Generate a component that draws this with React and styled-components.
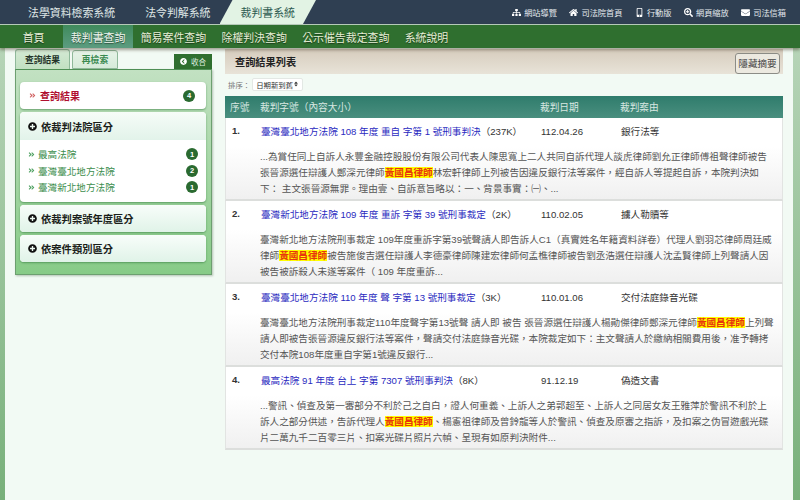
import { createGlobalStyle, styled } from "styled-components";
import {
  FaSitemap,
  FaHome,
  FaMobileAlt,
  FaSearchPlus,
  FaEnvelope,
  FaPlusCircle,
  FaAngleDoubleRight,
  FaChevronCircleLeft,
  FaSort,
} from "react-icons/fa";

const GlobalStyle = createGlobalStyle`
  html, body {
    margin: 0;
    padding: 0;
    height: 100%;
    overflow: hidden;
  }
  body {
    font-family: "Liberation Sans", "Noto Sans CJK TC", sans-serif;
  }
`;

const Page = styled.div`
  width: 800px;
  height: 500px;
  display: flex;
  flex-direction: column;
  overflow: hidden;
`;

const SystemBar = styled.div`
  height: 24px;
  flex: none;
  background: #2f3f52;
  border-bottom: 1px solid #b9cdbd;
  display: flex;
  align-items: center;
  justify-content: space-between;
  padding-left: 13px;
  padding-right: 14px;
`;

const SystemTabs = styled.div`
  display: flex;
  height: 100%;
`;

const SystemTab = styled.div`
  padding: 0 15px;
  display: flex;
  align-items: center;
  font-size: 10.9px;
  color: ${(p) => (p.$active ? "#2c5a50" : "#dfe6e6")};
  background: ${(p) => (p.$active ? "#e2f3e4" : "transparent")};
  clip-path: ${(p) =>
    p.$active ? "polygon(13px 0, 100% 0, calc(100% - 13px) 100%, 0 100%)" : "none"};
  ${(p) => p.$active && "padding: 0 21px; margin-left: -6px;"}
`;

const UtilLinks = styled.div`
  display: flex;
  align-items: center;
  gap: 12.5px;
`;

const UtilLink = styled.div`
  display: flex;
  align-items: center;
  gap: 3px;
  font-size: 8.2px;
  color: #e4eaee;
  svg {
    font-size: 9px;
    color: #fff;
  }
`;

const MainNav = styled.div`
  height: 23px;
  flex: none;
  background: #2f6f2f;
  display: flex;
  padding-left: 15px;
  box-shadow: 0 2px 3px rgba(60, 50, 30, 0.45);
  position: relative;
  z-index: 2;
`;

const NavItem = styled.div`
  display: flex;
  align-items: center;
  padding: 0 7.7px;
  margin-right: ${(p) => p.$gap || 0}px;
  font-size: 10.9px;
  color: ${(p) => (p.$active ? "#eef6ee" : "#e6efd6")};
  text-shadow: 0 1px 1px rgba(0, 0, 0, 0.5);
  background: ${(p) =>
    p.$active ? "linear-gradient(#3f8a5c, #5c9c80)" : "transparent"};
`;

const Body = styled.div`
  flex: 1;
  display: flex;
  padding: 0 7px 0 5px;
  background: linear-gradient(#b6d4b7, #78b07a);
  min-height: 0;
`;

const Main = styled.div`
  flex: 1;
  background: #f2faf4;
  display: flex;
  gap: 13px;
  padding: 1px 10px 0;
  min-width: 0;
`;

const Sidebar = styled.div`
  width: 197px;
  flex: none;
`;

const TabRow = styled.div`
  height: 20px;
  display: flex;
  align-items: flex-end;
  gap: 2px;
  position: relative;
  z-index: 1;
`;

const SideTab = styled.div`
  height: ${(p) => (p.$active ? 20 : 19)}px;
  box-sizing: border-box;
  width: ${(p) => (p.$active ? 55 : 46)}px;
  display: flex;
  align-items: center;
  justify-content: center;
  font-size: 8.8px;
  font-weight: bold;
  color: ${(p) => (p.$active ? "#24342a" : "#3a8a50")};
  background: ${(p) =>
    p.$active ? "linear-gradient(#d3e9d3, #c2e0c2)" : "linear-gradient(#e6f3e8, #d6ebd9)"};
  border: 1px solid #8fb89a;
  border-bottom: ${(p) => (p.$active ? "none" : "1px solid #8fb89a")};
  border-radius: 3px 3px 0 0;
`;

const CollapseButton = styled.div`
  margin-left: auto;
  height: 15px;
  width: 38px;
  background: #2f6f2f;
  color: #dfeee0;
  font-size: 7.6px;
  display: flex;
  align-items: center;
  justify-content: center;
  gap: 4px;
  svg {
    font-size: 7px;
    color: #fff;
  }
`;

const SidePanel = styled.div`
  height: 206px;
  box-sizing: border-box;
  background: linear-gradient(#c2e1c2, #87cb87);
  border: 1px solid #6d9f70;
  border-top-color: #4f8f55;
  box-shadow: 1px 1px 2px rgba(60, 90, 60, 0.35);
  padding: 12px 5px 0 4px;
  display: flex;
  flex-direction: column;
  gap: 3px;
`;

const Card = styled.div`
  background: #fff;
  border-radius: 4px;
  box-shadow: 0 1px 2px rgba(50, 120, 60, 0.6);
  overflow: hidden;
`;

const CardHead = styled.div`
  height: ${(p) => p.$height || 27}px;
  display: flex;
  align-items: center;
  padding: 0 8px;
  gap: 4px;
  font-size: 10.3px;
  font-weight: bold;
  color: #1b1f1b;
  background: ${(p) =>
    p.$open ? "linear-gradient(#f6fcf8, #e2f3ea)" : "linear-gradient(#f8fdfa, #e0f3e8)"};
  svg {
    font-size: 9px;
    color: #111;
  }
`;

const ResultHead = styled.div`
  height: 27px;
  display: flex;
  align-items: center;
  padding: 0 11px 0 9px;
  gap: 4px;
  font-size: 10px;
  font-weight: bold;
  color: #b01030;
  svg {
    font-size: 7px;
    color: #d06060;
  }
`;

const Badge = styled.span`
  margin-left: auto;
  width: 12px;
  height: 12px;
  border-radius: 50%;
  background: #2a6a30;
  color: #fff;
  font-size: 7.5px;
  font-weight: bold;
  display: flex;
  align-items: center;
  justify-content: center;
  flex: none;
`;

const CourtList = styled.div`
  padding: 6px 8px 6.5px 8px;
`;

const CourtItem = styled.div`
  height: 16.5px;
  display: flex;
  align-items: center;
  gap: 3px;
  font-size: 9.6px;
  color: #3b8d4c;
  svg {
    font-size: 7px;
    color: #4da060;
  }
`;

const Results = styled.div`
  flex: 1;
  min-width: 0;
`;

const TitleBar = styled.div`
  height: 25px;
  background: linear-gradient(#d6ccbd, #e8e3d8);
  display: flex;
  align-items: center;
  justify-content: space-between;
  padding: 0 3px 0 10px;
  font-size: 10.2px;
  font-weight: bold;
  color: #222;
`;

const HideButton = styled.div`
  width: 45px;
  height: 21px;
  box-sizing: border-box;
  border: 1px solid #8c8c86;
  border-radius: 3px;
  background: #ece9e0;
  font-size: 9.6px;
  font-weight: normal;
  color: #444;
  display: flex;
  align-items: center;
  justify-content: center;
  margin-top: 3px;
`;

const SortRow = styled.div`
  height: 20px;
  margin-bottom: 2px;
  display: flex;
  align-items: center;
  padding-left: 3px;
  gap: 2px;
  font-size: 7.4px;
  color: #777;
`;

const SortSelect = styled.div`
  width: 51px;
  height: 13px;
  box-sizing: border-box;
  background: #fff;
  border: 1px solid #e3e8e4;
  border-radius: 2px;
  display: flex;
  align-items: center;
  justify-content: space-between;
  padding: 0 3px;
  color: #333;
  svg {
    font-size: 6px;
  }
`;

const Columns = styled.div`
  display: grid;
  grid-template-columns: 30px 280px 80px 1fr;
  padding-left: 5px;
`;

const TableHead = styled(Columns)`
  height: 22px;
  align-items: center;
  background: linear-gradient(#2f7c6c, #4a8f7f);
  color: #d8e8e2;
  font-size: 9.7px;
`;

const Row = styled.div`
  height: 83px;
  box-sizing: border-box;
  background: linear-gradient(#fff 35%, #f0f0f0);
  border: 1px solid #e2e4e2;
  border-top: none;
  border-bottom: 2px solid #dcdedc;
  padding-top: 7px;
`;

const RowNum = styled.div`
  font-size: 9.6px;
  font-weight: bold;
  color: #333;
  padding-left: 1px;
`;

const RowCell = styled.div`
  font-size: 9.6px;
  line-height: 14px;
  color: #333;
`;

const CaseLink = styled.span`
  color: #2a2ac0;
`;

const Summary = styled.div`
  margin: 10px 8px 0 34px;
  font-size: 9.6px;
  line-height: 16.2px;
  color: #555;
`;

const Mark = styled.span`
  background: #ffff00;
  color: #e8350c;
  font-weight: bold;
`;

const courts = [
  { name: "最高法院", count: 1 },
  { name: "臺灣臺北地方法院", count: 2 },
  { name: "臺灣新北地方法院", count: 1 },
];

const rows = [
  {
    no: "1.",
    title: "臺灣臺北地方法院 108 年度 重自 字第 1 號刑事判決",
    size: "（237K）",
    date: "112.04.26",
    reason: "銀行法等",
    before:
      "...為賞任同上自訴人永豐金融控股股份有限公司代表人陳思寬上二人共同自訴代理人談虎律師劉允正律師傅祖聲律師被告張晉源選任辯護人鄭深元律師",
    after:
      "林宏軒律師上列被告因違反銀行法等案件，經自訴人等提起自訴，本院判決如下： 主文張晉源無罪。理由壹、自訴意旨略以：一、背景事實：㈠、...",
  },
  {
    no: "2.",
    title: "臺灣新北地方法院 109 年度 重訴 字第 39 號刑事裁定",
    size: "（2K）",
    date: "110.02.05",
    reason: "擄人勒贖等",
    before:
      "臺灣新北地方法院刑事裁定 109年度重訴字第39號聲請人即告訴人C1（真實姓名年籍資料詳卷）代理人劉羽芯律師周廷威律師",
    after:
      "被告施俊吉選任辯護人李德豪律師陳建宏律師何孟樵律師被告劉丞浩選任辯護人沈孟賢律師上列聲請人因被告被訴殺人未遂等案件（ 109 年度重訴...",
  },
  {
    no: "3.",
    title: "臺灣臺北地方法院 110 年度 聲 字第 13 號刑事裁定",
    size: "（3K）",
    date: "110.01.06",
    reason: "交付法庭錄音光碟",
    before:
      "臺灣臺北地方法院刑事裁定110年度聲字第13號聲 請人即 被告 張晉源選任辯護人楊勛傑律師鄭深元律師",
    after:
      "上列聲請人即被告張晉源違反銀行法等案件，聲請交付法庭錄音光碟，本院裁定如下：主文聲請人於繳納相關費用後，准予轉拷交付本院108年度重自字第1號違反銀行...",
  },
  {
    no: "4.",
    title: "最高法院 91 年度 台上 字第 7307 號刑事判決",
    size: "（8K）",
    date: "91.12.19",
    reason: "偽造文書",
    before:
      "...警訊、偵查及第一審部分不利於己之自白，證人何重義、上訴人之弟郭超至、上訴人之同居女友王雅萍於警訊不利於上訴人之部分供述，告訴代理人",
    after:
      "、楊憲祖律師及曾鈴龍等人於警訊、偵查及原審之指訴，及扣案之伪冒遊戲光碟片二萬九千二百零三片、扣案光碟片照片六幀、呈現有如原判決附件...",
  },
];

function App() {
  return (
    <Page>
      <GlobalStyle />
      <SystemBar>
        <SystemTabs>
          <SystemTab>法學資料檢索系統</SystemTab>
          <SystemTab>法令判解系統</SystemTab>
          <SystemTab $active>裁判書系統</SystemTab>
        </SystemTabs>
        <UtilLinks>
          <UtilLink><FaSitemap />網站導覽</UtilLink>
          <UtilLink><FaHome />司法院首頁</UtilLink>
          <UtilLink><FaMobileAlt />行動版</UtilLink>
          <UtilLink><FaSearchPlus />網頁縮放</UtilLink>
          <UtilLink><FaEnvelope />司法信箱</UtilLink>
        </UtilLinks>
      </SystemBar>
      <MainNav>
        <NavItem $gap={11}>首頁</NavItem>
        <NavItem $active>裁判書查詢</NavItem>
        <NavItem>簡易案件查詢</NavItem>
        <NavItem>除權判決查詢</NavItem>
        <NavItem>公示催告裁定查詢</NavItem>
        <NavItem>系統說明</NavItem>
      </MainNav>
      <Body>
        <Main>
          <Sidebar>
            <TabRow>
              <SideTab $active>查詢結果</SideTab>
              <SideTab>再檢索</SideTab>
              <CollapseButton><FaChevronCircleLeft />收合</CollapseButton>
            </TabRow>
            <SidePanel>
              <Card>
                <ResultHead>
                  <FaAngleDoubleRight />查詢結果<Badge>4</Badge>
                </ResultHead>
              </Card>
              <Card>
                <CardHead $open $height={28}><FaPlusCircle />依裁判法院區分</CardHead>
                <CourtList>
                  {courts.map((c) => (
                    <CourtItem key={c.name}>
                      <FaAngleDoubleRight />{c.name}<Badge>{c.count}</Badge>
                    </CourtItem>
                  ))}
                </CourtList>
              </Card>
              <Card>
                <CardHead><FaPlusCircle />依裁判案號年度區分</CardHead>
              </Card>
              <Card>
                <CardHead><FaPlusCircle />依案件類別區分</CardHead>
              </Card>
            </SidePanel>
          </Sidebar>
          <Results>
            <TitleBar>
              查詢結果列表
              <HideButton>隱藏摘要</HideButton>
            </TitleBar>
            <SortRow>
              排序：
              <SortSelect>日期新到舊<FaSort /></SortSelect>
            </SortRow>
            <TableHead>
              <div>序號</div>
              <div>裁判字號（內容大小）</div>
              <div>裁判日期</div>
              <div>裁判案由</div>
            </TableHead>
            {rows.map((r) => (
              <Row key={r.no}>
                <Columns>
                  <RowNum>{r.no}</RowNum>
                  <RowCell><CaseLink>{r.title}</CaseLink>{r.size}</RowCell>
                  <RowCell>{r.date}</RowCell>
                  <RowCell>{r.reason}</RowCell>
                </Columns>
                <Summary>
                  {r.before}<Mark>黃國昌律師</Mark>{r.after}
                </Summary>
              </Row>
            ))}
          </Results>
        </Main>
      </Body>
    </Page>
  );
}

export default App;
